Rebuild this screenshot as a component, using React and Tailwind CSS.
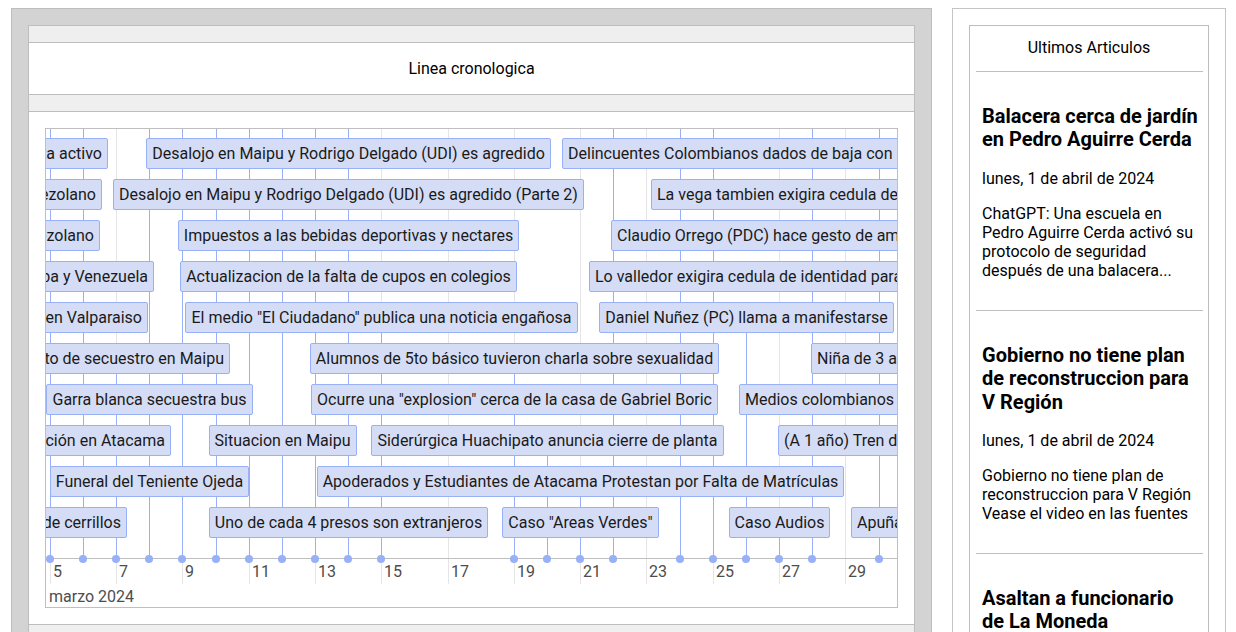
import React from "react";

const X = {5:50,6:83,7:116,8:149,9:182,10:216,11:249,12:282,13:315,14:348,15:381,17:448,19:514,20:547,21:580,22:613,23:646,24:680,25:713,26:746,27:779,28:812,29:845,30:879};
const OX = 46;
const AXIS = 429;
const rowTop = (r) => 9 + 41 * r;

const centered = [
  { r: 0, d: 14, t: "Desalojo en Maipu y Rodrigo Delgado (UDI) es agredido" },
  { r: 1, d: 14, t: "Desalojo en Maipu y Rodrigo Delgado (UDI) es agredido (Parte 2)" },
  { r: 2, d: 14, t: "Impuestos a las bebidas deportivas y nectares" },
  { r: 3, d: 14, t: "Actualizacion de la falta de cupos en colegios" },
  { r: 4, d: 15, t: 'El medio "El Ciudadano" publica una noticia engañosa' },
  { r: 4, d: 26, t: "Daniel Nuñez (PC) llama a manifestarse" },
  { r: 5, d: 19, t: "Alumnos de 5to básico tuvieron charla sobre sexualidad" },
  { r: 6, d: 8, t: "Garra blanca secuestra bus" },
  { r: 6, d: 19, t: 'Ocurre una "explosion" cerca de la casa de Gabriel Boric' },
  { r: 7, d: 12, t: "Situacion en Maipu" },
  { r: 7, d: 20, t: "Siderúrgica Huachipato anuncia cierre de planta" },
  { r: 8, d: 8, t: "Funeral del Teniente Ojeda" },
  { r: 8, d: 21, t: "Apoderados y Estudiantes de Atacama Protestan por Falta de Matrículas" },
  { r: 9, d: 14, t: "Uno de cada 4 presos son extranjeros" },
  { r: 9, d: 21, t: 'Caso "Areas Verdes"' },
  { r: 9, d: 27, t: "Caso Audios" },
];

// items running past the left edge: anchored by their right edge pixel
const leftClipped = [
  { r: 0, p: 107, t: "Tren de Aragua esta activo" },
  { r: 1, p: 101, t: "Detienen a ciudadano venezolano" },
  { r: 2, p: 99, t: "Asesinan a ciudadano venezolano" },
  { r: 3, p: 153, t: "Relaciones entre Cuba y Venezuela" },
  { r: 4, p: 147, t: "Temporal en Valparaiso" },
  { r: 5, p: 229, t: "Intento de secuestro en Maipu" },
  { r: 7, p: 170, t: "Manifestación en Atacama" },
  { r: 9, p: 126, t: "Balacera en la comuna de cerrillos" },
];

// items running past the right edge: anchored by their left edge pixel
const rightClipped = [
  { r: 0, p: 562, t: "Delincuentes Colombianos dados de baja con armas" },
  { r: 1, p: 651, t: "La vega tambien exigira cedula de identidad" },
  { r: 2, p: 611, t: "Claudio Orrego (PDC) hace gesto de amistad" },
  { r: 3, p: 589, t: "Lo valledor exigira cedula de identidad para comprar" },
  { r: 5, p: 811, t: "Niña de 3 años baleada" },
  { r: 6, p: 739, t: "Medios colombianos informan" },
  { r: 7, p: 778, t: "(A 1 año) Tren de Aragua" },
  { r: 9, p: 851, t: "Apuñalan a joven" },
];

const fromTop = [5, 6, 8, 9, 10, 11, 12, 13, 14, 22, 24, 25, 28, 30];
const fromRow = { 7: 5, 15: 4, 19: 5, 20: 7, 21: 8, 26: 4, 27: 9 };
const gridDays = [5, 7, 9, 11, 13, 15, 17, 19, 21, 23, 25, 27, 29];

const itemCls =
  "absolute whitespace-nowrap rounded-[2px] border border-[#97b0f8] bg-[#d5ddf6] px-[5px] py-[5px] text-[16px] leading-[19px] text-[#1a1a1a]";

function Timeline() {
  const lines = [];
  fromTop.forEach((d) => lines.push({ d, y: 0 }));
  Object.entries(fromRow).forEach(([d, r]) => lines.push({ d: Number(d), y: rowTop(r) + 31 }));
  const dots = lines.map((l) => l.d);
  return (
    <div className="relative h-[480px] w-[853px] overflow-hidden border border-[#bfbfbf] bg-white">
      {gridDays.map((d) => (
        <div key={"g" + d} className="absolute top-0 h-[455px] w-px bg-[#e5e5e5]" style={{ left: X[d] - OX }} />
      ))}
      {lines.map((l) => (
        <div
          key={"l" + l.d}
          className="absolute w-px bg-[#97b0f8]"
          style={{ left: X[l.d] - OX, top: l.y, height: AXIS - l.y }}
        />
      ))}
      <div className="absolute left-0 right-0 h-px bg-[#bfbfbf]" style={{ top: AXIS }} />
      {dots.map((d) => (
        <div
          key={"d" + d}
          className="absolute h-[8px] w-[8px] rounded-full bg-[#97b0f8]"
          style={{ left: X[d] - OX - 4, top: AXIS - 3 }}
        />
      ))}
      {gridDays.map((d) => (
        <div
          key={"t" + d}
          className="absolute p-[3px] text-[16px] leading-[19px] text-[#4d4d4d]"
          style={{ left: X[d] - OX, top: AXIS + 1 }}
        >
          {d}
        </div>
      ))}
      <div className="absolute left-0 p-[3px] text-[16px] leading-[19px] text-[#4d4d4d]" style={{ top: AXIS + 26 }}>
        marzo 2024
      </div>
      {centered.map((it, i) => (
        <div
          key={"c" + i}
          className="absolute flex w-0 justify-center"
          style={{ left: X[it.d] - OX + 0.5, top: rowTop(it.r) }}
        >
          <div className="whitespace-nowrap rounded-[2px] border border-[#97b0f8] bg-[#d5ddf6] px-[5px] py-[5px] text-[16px] leading-[19px] text-[#1a1a1a]">
            {it.t}
          </div>
        </div>
      ))}
      {leftClipped.map((it, i) => (
        <div key={"lc" + i} className={itemCls} style={{ right: 896 - it.p, top: rowTop(it.r) }}>
          {it.t}
        </div>
      ))}
      {rightClipped.map((it, i) => (
        <div key={"rc" + i} className={itemCls} style={{ left: it.p - OX, top: rowTop(it.r) }}>
          {it.t}
        </div>
      ))}
    </div>
  );
}

const articles = [
  {
    t: "Balacera cerca de jardín en Pedro Aguirre Cerda",
    d: "lunes, 1 de abril de 2024",
    s: "ChatGPT: Una escuela en Pedro Aguirre Cerda activó su protocolo de seguridad después de una balacera...",
  },
  {
    t: "Gobierno no tiene plan de reconstruccion para V Región",
    d: "lunes, 1 de abril de 2024",
    s: "Gobierno no tiene plan de reconstruccion para V Región Vease el video en las fuentes",
  },
  {
    t: "Asaltan a funcionario de La Moneda",
    d: "lunes, 1 de abril de 2024",
    s: "Funcionario de La Moneda fue asaltado en las cercanias del palacio",
  },
];

export default function App() {
  return (
    <div className="flex items-start gap-[20px] bg-white pl-[11px] pt-[8px] font-['Roboto',sans-serif] text-black">
      <div className="w-[921px] shrink-0 border border-[#bdbdbd] bg-[#d3d3d3] p-[16px]">
        <div className="flex flex-col border border-[#bdbdbd] bg-white">
          <div className="h-[17px] border-b border-[#bdbdbd] bg-[#efefef]" />
          <div className="flex h-[52px] items-center justify-center border-b border-[#bdbdbd] text-[16px] leading-[19px]">
            Linea cronologica
          </div>
          <div className="h-[17px] border-b border-[#bdbdbd] bg-[#efefef]" />
          <div className="p-[16px]">
            <Timeline />
          </div>
          <div className="h-[40px] border-t border-[#bdbdbd] bg-[#efefef]" />
        </div>
      </div>
      <div className="w-[274px] shrink-0 border border-[#c4c4c4] bg-white p-[16px]">
        <div className="flex flex-col border border-[#bdbdbd] bg-white">
          <div className="pb-[14px] pt-[12px] text-center text-[16px] leading-[19px]">Ultimos Articulos</div>
          {articles.map((a, i) => (
            <div key={i} className="flex flex-col">
              <div className="ml-[6px] mr-[5px] h-px bg-[#c0c0c0]" />
              <div className="flex flex-col gap-[16px] pb-[30px] pl-[12px] pr-[10px] pt-[33px]">
                <h3 className="mb-[1px] text-[20px] font-bold leading-[23.4px]">{a.t}</h3>
                <div className="text-[16px] leading-[19px]">{a.d}</div>
                <div className="text-[16px] leading-[19px]">{a.s}</div>
              </div>
            </div>
          ))}
        </div>
      </div>
    </div>
  );
}
